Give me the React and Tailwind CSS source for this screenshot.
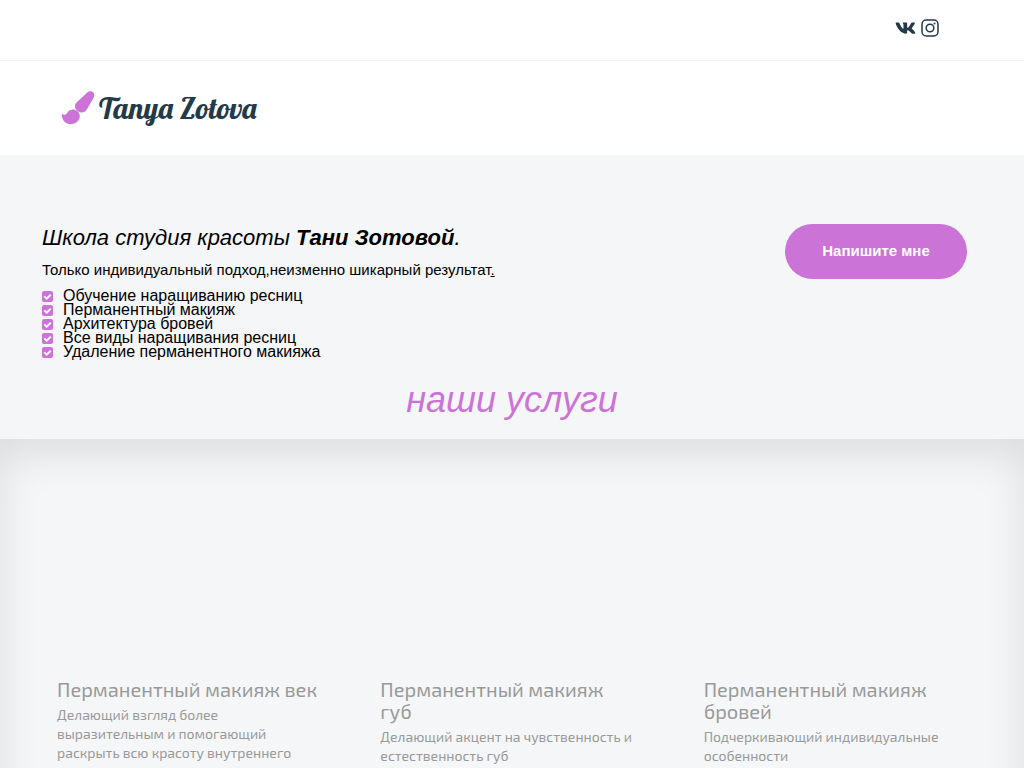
import React from "react";
import { FaVk } from "react-icons/fa";

const features = [
  "Обучение наращиванию ресниц",
  "Перманентный макияж",
  "Архитектура бровей",
  "Все виды наращивания ресниц",
  "Удаление перманентного макияжа",
];

const services = [
  {
    title: "Перманентный макияж век",
    text: "Делающий взгляд более выразительным и помогающий раскрыть всю красоту внутреннего",
  },
  {
    title: "Перманентный макияж\nгуб",
    text: "Делающий акцент на чувственность и естественность губ",
  },
  {
    title: "Перманентный макияж бровей",
    text: "Подчеркивающий индивидуальные особенности",
  },
];

const InstagramIcon = () => (
  <svg viewBox="0 0 18 18" className="h-[18px] w-[18px]" fill="none" stroke="currentColor" strokeWidth="1.5">
    <rect x="1" y="1" width="16" height="16" rx="4.2" />
    <circle cx="9" cy="9" r="3.8" />
    <circle cx="13.5" cy="4.5" r="1" fill="currentColor" stroke="none" />
  </svg>
);

const BrushIcon = () => (
  <svg viewBox="0 0 34 34" className="h-[34px] w-[34px]" fill="currentColor">
    <path d="M26 1.8C28.2 0 30.4 -.1 32 1.2C33.500 2.500 33.700 4.700 32.600 6.700L26 18.200C24.500 20.700 22.200 21.700 19.800 21.400C16.800 21 14.300 18.600 14 15.800C13.800 13.800 14.600 12.300 16 10.900Z" />
    <path d="M1 22C1.300 23.500 2.700 24.200 4.200 23.700C5.500 23.200 5.900 21.900 7 20.700C8.700 18.900 11.200 18.200 13.600 18.800C16.800 19.600 19 22.300 18.800 25.600C18.500 30.600 13.900 33.400 9.500 33.200C4 32.900 .1 28.500 1 22Z" />
  </svg>
);

const CheckIcon = () => (
  <svg viewBox="0 0 11 11" className="h-[11px] w-[11px]">
    <rect width="11" height="11" rx="2" fill="#cc73d7" />
    <path d="M2.300 5.400L4.700 7.700L8.800 3.600" fill="none" stroke="#fff" strokeWidth="2" />
  </svg>
);

const Header = () => (
  <header className="bg-white text-[#233a49]">
    <div className="h-[61px] flex items-start justify-end gap-[5px] border-b border-[#f3f3f3] pt-[19px] pr-[85px]">
      <a href="#vk" aria-label="VK">
        <FaVk className="h-[18px] w-[21px]" preserveAspectRatio="none" />
      </a>
      <a href="#instagram" aria-label="Instagram">
        <InstagramIcon />
      </a>
    </div>
    <div className="h-[94px] flex items-center px-[61px]">
      <a href="#home" className="flex items-center gap-1">
        <span className="text-[#cc73d7]">
          <BrushIcon />
        </span>
        <span className="font-['Lobster','Liberation_Serif',serif] text-[30px] leading-[34px] whitespace-nowrap">
          Tanya Zotova
        </span>
      </a>
    </div>
  </header>
);

const Intro = () => (
  <section className="px-[42px] pt-[69px] pb-[19px] font-['Liberation_Sans',sans-serif] text-black">
    <div className="flex items-start justify-between pr-[15px]">
      <div>
        <h1 className="text-[22px] leading-7 italic">
          Школа студия красоты <strong>Тани Зотовой</strong>.
        </h1>
        <p className="mt-2 text-[15px] leading-5">
          Только индивидуальный подход,неизменно шикарный результат<u>.</u>
        </p>
        <ul className="mt-[9px] text-base leading-[14px]">
          {features.map((item) => (
            <li key={item} className="flex items-center gap-[10px]">
              <CheckIcon />
              {item}
            </li>
          ))}
        </ul>
      </div>
      <button className="h-[55px] w-[182px] rounded-full bg-[#cc73d7] text-[15px] font-bold text-white">
        Напишите мне
      </button>
    </div>
    <h2 className="mt-[21px] text-center text-[36px] leading-[40px] italic text-[#cc73d7]">
      наши услуги
    </h2>
  </section>
);

const Services = () => (
  <section className="grid min-h-[560px] grid-cols-3 gap-[60px] px-[57px] pt-[239px] font-['Exo_2','Open_Sans',sans-serif] text-[#999999] shadow-[inset_0_15px_40px_rgba(0,0,0,0.1)]">
    {services.map((service) => (
      <article key={service.title}>
        <h3 className="text-[20px] leading-[22px] whitespace-pre-line">{service.title}</h3>
        <p className="mt-[5px] text-[14px] leading-[19px]">{service.text}</p>
      </article>
    ))}
  </section>
);

const App = () => {
  return (
    <div className="h-screen overflow-hidden bg-[#f4f6f8]">
      <Header />
      <main>
        <Intro />
        <Services />
      </main>
    </div>
  );
};

export default App;
